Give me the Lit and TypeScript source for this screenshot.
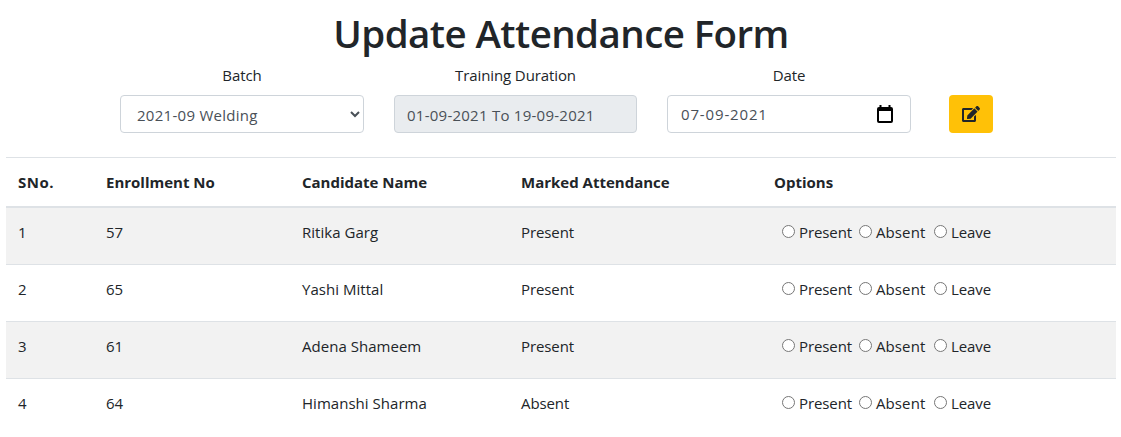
import { LitElement, html, css } from "lit";
import { customElement, state } from "lit/decorators.js";

interface Candidate {
  enrollment: string;
  name: string;
  marked: string;
}

@customElement("app-root")
export class AppRoot extends LitElement {
  static styles = css`
    :host {
      display: block;
      box-sizing: border-box;
      height: 437px;
      overflow: hidden;
      padding: 9px 5px 0 6px;
      background: #fff;
      color: #212529;
      font: 400 15px/24px "Open Sans", "Noto Sans", sans-serif;
      letter-spacing: -0.1px;
    }
    * {
      box-sizing: border-box;
    }
    .title {
      margin: 0 0 6px;
      text-align: center;
      font-size: 38.5px;
      line-height: 48px;
      font-weight: 600;
      letter-spacing: -0.58px;
    }
    .filters {
      display: grid;
      grid-template-columns: 244px 243px 244px 44px;
      column-gap: 30px;
      padding-left: 114px;
      margin-bottom: 24px;
      align-items: end;
    }
    .field {
      display: flex;
      flex-direction: column;
      gap: 8px;
      text-align: center;
    }
    .control {
      width: 100%;
      height: 38px;
      border: 1px solid #ced4da;
      border-radius: 4px;
      padding: 7px 12px 5px;
      background: #fff;
      color: #495057;
      font: inherit;
      letter-spacing: 0.28px;
      text-align: left;
    }
    .readonly {
      background: #e9ecef;
      letter-spacing: 0.25px;
    }
    .date {
      display: flex;
      align-items: center;
      justify-content: space-between;
      padding: 6px 17px 6px 13px;
      letter-spacing: 0.85px;
    }
    .date svg,
    .edit svg {
      display: block;
    }
    .edit {
      display: flex;
      align-items: center;
      justify-content: center;
      width: 44px;
      height: 38px;
      margin-left: 8px;
      padding: 0;
      border: 0;
      border-radius: 4px;
      background: #ffc107;
      color: #212529;
    }
    .row {
      display: grid;
      grid-template-columns: 88px 196px 219px 253px 1fr;
      height: 57px;
      padding: 12px 0 0 12px;
      border-top: 1px solid #dee2e6;
    }
    .name {
      letter-spacing: 0.03px;
    }
    .head {
      height: 51px;
      border-bottom: 2px solid #dee2e6;
      font-weight: 700;
      letter-spacing: 0;
    }
    .serial {
      letter-spacing: 0.5px;
    }
    .head + .row {
      height: 56px;
      border-top: 0;
    }
    .striped {
      background: #f2f2f2;
    }
    .options {
      display: flex;
      padding-left: 8px;
    }
    .option {
      display: flex;
      gap: 4px;
    }
    .present {
      width: 77px;
    }
    .absent {
      width: 75px;
      letter-spacing: 0.1px;
    }
    .radio {
      width: 13px;
      height: 13px;
      margin: 5px 0 0;
    }
  `;

  @state() private candidates: Candidate[] = [
    { enrollment: "57", name: "Ritika Garg", marked: "Present" },
    { enrollment: "65", name: "Yashi Mittal", marked: "Present" },
    { enrollment: "61", name: "Adena Shameem", marked: "Present" },
    { enrollment: "64", name: "Himanshi Sharma", marked: "Absent" },
  ];

  private renderRow(c: Candidate, i: number) {
    return html`<div class="row ${i % 2 ? "" : "striped"}">
      <span>${i + 1}</span>
      <span>${c.enrollment}</span>
      <span class="name">${c.name}</span>
      <span>${c.marked}</span>
      <div class="options">
        ${["Present", "Absent", "Leave"].map(
          (o) => html`<label class="option ${o.toLowerCase()}"
            ><input class="radio" type="radio" name="mark-${i}" />${o}</label
          >`
        )}
      </div>
    </div>`;
  }

  render() {
    return html`
      <h1 class="title">Update Attendance Form</h1>
      <div class="filters">
        <label class="field"
          ><span>Batch</span>
          <select class="control">
            <option>2021-09 Welding</option>
          </select></label
        >
        <div class="field">
          <span>Training Duration</span>
          <div class="control readonly">01-09-2021 To 19-09-2021</div>
        </div>
        <div class="field">
          <span>Date</span>
          <div class="control date">
            <span>07-09-2021</span>
            <svg width="16" height="18" viewBox="0 0 16 18" fill="#000">
              <path
                fill-rule="evenodd"
                d="M2.5 0h2v2h7V0h2v2H14a2 2 0 0 1 2 2v12a2 2 0 0 1-2 2H2a2 2 0 0 1-2-2V4a2 2 0 0 1 2-2h.5zM2 6v10h12V6z"
              />
            </svg>
          </div>
        </div>
        <button class="edit" aria-label="Edit">
          <svg width="18" height="16" viewBox="0 0 576 512" fill="currentColor">
            <path
              d="M402.600 83.200l90.200 90.200c3.800 3.800 3.800 10 0 13.800L274.400 405.600l-92.800 10.300c-12.400 1.400-22.900-9.100-21.500-21.500l10.300-92.800L388.800 83.200c3.800-3.800 10-3.800 13.800 0zm162-22.900l-48.800-48.800c-15.200-15.200-39.900-15.200-55.200 0l-35.400 35.400c-3.800 3.800-3.800 10 0 13.800l90.200 90.200c3.800 3.800 10 3.800 13.800 0l35.400-35.400c15.200-15.300 15.200-40 0-55.200zM384 346.200V448H64V128h229.800c3.200 0 6.200-1.300 8.500-3.500l40-40c7.600-7.600 2.200-20.500-8.500-20.500H48C21.500 64 0 85.500 0 112v352c0 26.500 21.500 48 48 48h352c26.500 0 48-21.500 48-48V306.200c0-10.700-12.900-16-20.500-8.500l-40 40c-2.200 2.300-3.500 5.300-3.500 8.500z"
            />
          </svg>
        </button>
      </div>
      <div class="table">
        <div class="row head">
          <span class="serial">SNo.</span><span>Enrollment No</span
          ><span>Candidate Name</span><span>Marked Attendance</span
          ><span>Options</span>
        </div>
        ${this.candidates.map((c, i) => this.renderRow(c, i))}
      </div>
    `;
  }
}
